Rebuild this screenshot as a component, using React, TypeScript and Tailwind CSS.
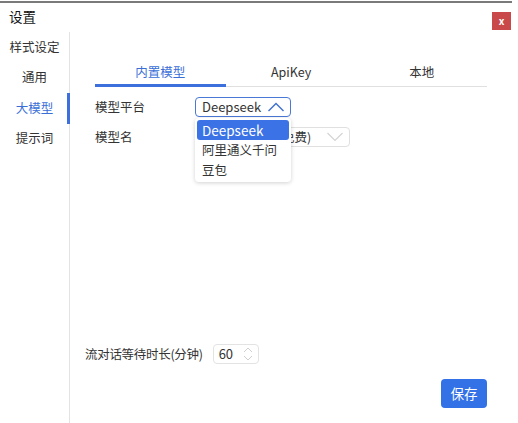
import React, { useState } from 'react';

const FONT = { fontFamily: '"Noto Sans CJK SC", "Noto Sans", sans-serif' };

const MENU = ['样式设定', '通用', '大模型', '提示词'];
const TABS = ['内置模型', 'ApiKey', '本地'];
const PLATFORMS = ['Deepseek', '阿里通义千问', '豆包'];

const ChevronUp = () => (
  <svg width="18" height="10" viewBox="0 0 18 10" fill="none">
    <path d="M1.5 9 L9 1.5 L16.5 9" stroke="#3d6fd0" strokeWidth="1.4" />
  </svg>
);

const ChevronDown = () => (
  <svg width="18" height="10" viewBox="0 0 18 10" fill="none">
    <path d="M1.5 1 L9 8.5 L16.5 1" stroke="#d4d4d4" strokeWidth="1.2" />
  </svg>
);

export default function App() {
  const [menu, setMenu] = useState(2);
  const [tab, setTab] = useState(0);
  const [platform, setPlatform] = useState(0);

  return (
    <div className="relative w-[518px] h-[423px] bg-white overflow-hidden text-[#333]" style={FONT}>
      {/* top edge */}
      <div className="w-[512px] h-[2px] mt-px bg-[#7a7a7a]" />

      {/* title bar */}
      <div className="flex items-center justify-between h-[29px] pl-[9px] pr-[7px]">
        <span className="text-[13.5px] text-[#111] -mt-[2px]">设置</span>
        <button className="w-[19px] h-[18px] mt-[6px] bg-[#c9484a] text-white text-[10px] font-bold leading-none flex items-center justify-center">
          x
        </button>
      </div>

      <div className="flex h-[391px]">
        {/* sidebar */}
        <div className="w-[70px] border-r border-[#e3e3e3] flex flex-col">
          {MENU.map((m, i) => (
            <div
              key={m}
              onClick={() => setMenu(i)}
              className={`relative h-[30.5px] flex items-center justify-center text-[12.5px] cursor-pointer ${
                menu === i ? 'text-[#3a6fd8]' : 'text-[#333]'
              }`}
            >
              {m}
              {menu === i && <div className="absolute right-[-1px] top-0 w-[3px] h-full bg-[#3d70dc]" />}
            </div>
          ))}
        </div>

        {/* main */}
        <div className="flex-1 flex flex-col pl-[25px] pr-[31px] pb-[15px]">
          <div className="flex mt-[29px] border-b border-[#e0e0e0]">
            {TABS.map((t, i) => (
              <div
                key={t}
                onClick={() => setTab(i)}
                className={`flex-1 h-[26px] -mb-px flex items-center justify-center text-[12.5px] cursor-pointer border-b-[3px] ${
                  tab === i ? 'text-[#3a6fd8] border-[#3d70dc]' : 'text-[#333] border-transparent'
                }`}
              >
                {t}
              </div>
            ))}
          </div>

          <div className="flex flex-col gap-[10px] mt-[10px]">
            <div className="flex items-center h-5">
              <span className="w-[100px] text-[12.5px]">模型平台</span>
              <div className="relative">
                <div className="w-[96px] h-5 border border-[#4a78d6] rounded-[4px] flex items-center justify-between pl-[6px] pr-[5px] text-[13px]">
                  <span>{PLATFORMS[platform]}</span>
                  <ChevronUp />
                </div>
                <div className="absolute left-0 top-[21px] z-10 w-[96px] bg-white rounded-[4px] shadow-[0_1px_4px_rgba(0,0,0,0.18)] p-[2px] flex flex-col">
                  {PLATFORMS.map((p, i) => (
                    <div
                      key={p}
                      onClick={() => setPlatform(i)}
                      className={`h-5 flex items-center pl-[5px] rounded-[3px] ${
                        i === 0 ? 'text-[13.5px]' : 'text-[12.5px]'
                      } ${platform === i ? 'bg-[#3b72e6] text-white' : 'text-[#333]'}`}
                    >
                      {p}
                    </div>
                  ))}
                </div>
              </div>
            </div>
            <div className="flex items-center h-5">
              <span className="w-[100px] text-[12.5px]">模型名</span>
              <div className="w-[155px] h-5 border border-[#e0e0e0] rounded-[4px] flex items-center justify-between pl-[6px] pr-[5px] text-[12.5px]">
                <span>deepseek-v3 (免费)</span>
                <ChevronDown />
              </div>
            </div>
          </div>

          <div className="mt-auto flex items-center -ml-[10px] h-5">
            <span className="text-[12.5px] mr-[10px] tracking-[-0.3px]">流对话等待时长(分钟)</span>
            <div className="w-[46px] h-5 border border-[#e3e3e3] rounded-[4px] flex items-center justify-between pl-[5px] pr-[5px] text-[13px]">
              <span>60</span>
              <svg width="10" height="16" viewBox="0 0 10 16" fill="none">
                <path d="M1 6 L5 2 L9 6 M1 10 L5 14 L9 10" stroke="#d0d0d0" strokeWidth="1" />
              </svg>
            </div>
          </div>

          <div className="flex justify-end mt-[15px]">
            <button className="w-[46px] h-[29px] rounded-[4px] bg-[#3271e6] text-white text-[13.5px]">保存</button>
          </div>
        </div>
      </div>
    </div>
  );
}
